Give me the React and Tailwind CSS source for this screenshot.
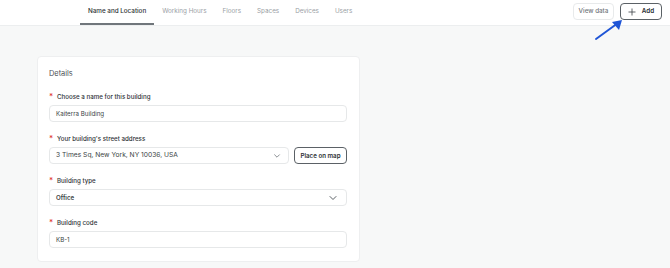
import React from "react";

const font = { fontFamily: "Inter, 'Liberation Sans', sans-serif" };

function Chevron({ size = 8, className = "" }) {
  return (
    <svg width={size} height={size} viewBox="0 0 10 10" className={className} fill="none">
      <path d="M2 3.5 L5 6.5 L8 3.5" stroke="currentColor" strokeWidth="1" strokeLinecap="round" strokeLinejoin="round" />
    </svg>
  );
}

function Label({ children }) {
  return (
    <div className="flex items-center h-[10px] text-[6.2px] text-[#2f3337] font-medium">
      <span className="text-[#e0322b] w-[8px] text-[8px] leading-none -mt-[3px]">*</span>
      <span>{children}</span>
    </div>
  );
}

function Field({ children, className = "" }) {
  return (
    <div className={`h-[17px] border border-[#e6e8e9] rounded-[4px] bg-white flex items-center px-[6px] text-[6.2px] text-[#3a3f44] ${className}`}>
      {children}
    </div>
  );
}

export default function App() {
  const tabs = ["Name and Location", "Working Hours", "Floors", "Spaces", "Devices", "Users"];
  return (
    <div className="relative w-[670px] h-[268px] bg-[#f7f8f8] overflow-hidden" style={font}>
      <div className="h-[26px] bg-white border-b border-[#eceeef] flex items-stretch">
        <div className="flex ml-[80px]">
          {tabs.map((t, i) => (
            <div
              key={t}
              className={`px-2 flex items-center text-[6.3px] ${i === 0 ? "text-[#2b2f33] font-medium border-b-2 border-[#70767b]" : "text-[#9aa0a5] border-b-2 border-transparent"}`}
            >
              <span>{t}</span>
            </div>
          ))}
        </div>
        <div className="ml-auto flex items-start gap-[6px] pt-[3px] pr-[8px]">
          <div className="h-[17px] w-[41px] border border-[#e8eaeb] rounded-[4px] flex items-center justify-center text-[6.3px] text-[#6f757a] font-medium">
            View data
          </div>
          <div className="h-[17px] w-[42px] border border-[#5b6166] rounded-[4px] flex items-center justify-center gap-[6px] text-[6.3px] text-[#2b2f33] font-semibold">
            <svg width="8" height="8" viewBox="0 0 8 8">
              <path d="M4 0.5 V7.5 M0.5 4 H7.5" stroke="#3a3f44" strokeWidth="0.8" />
            </svg>
            <span>Add</span>
          </div>
        </div>
      </div>

      <div className="pt-[30px] pl-[37px]">
        <div className="w-[323px] bg-white border border-[#eeeff0] rounded-[4px] pl-[11px] pr-[12px] pt-[12px] pb-[13px] flex flex-col">
          <div className="h-[10px] flex items-center text-[7.4px] text-[#4a4f54]">Details</div>

          <div className="mt-[13px]">
            <Label>Choose a name for this building</Label>
            <Field className="mt-[3px]">Kaiterra Building</Field>
          </div>

          <div className="mt-[12px]">
            <Label>Your building's street address</Label>
            <div className="mt-[3px] flex gap-[5px]">
              <Field className="flex-1 justify-between text-[6.7px]">
                <span>3 Times Sq, New York, NY 10036, USA</span>
                <Chevron size={8} className="text-[#6f757a] mr-[1px]" />
              </Field>
              <div className="h-[17px] w-[53px] border border-[#5b6166] rounded-[4px] flex items-center justify-center text-[6.2px] text-[#2b2f33] font-semibold">
                Place on map
              </div>
            </div>
          </div>

          <div className="mt-[12px]">
            <Label>Building type</Label>
            <Field className="mt-[3px] justify-between font-semibold">
              <span>Office</span>
              <Chevron size={10} className="text-[#5b6166] mr-[2px]" />
            </Field>
          </div>

          <div className="mt-[12px]">
            <Label>Building code</Label>
            <Field className="mt-[3px]">KB-1</Field>
          </div>
        </div>
      </div>

      <svg className="absolute left-[592px] top-[16px]" width="34" height="28" viewBox="0 0 34 28">
        <path d="M4 23 L26 7" stroke="#1f55d6" strokeWidth="2" strokeLinecap="round" />
        <path d="M30 4 L20 6 L27 14 Z" fill="#1f55d6" />
      </svg>
    </div>
  );
}
